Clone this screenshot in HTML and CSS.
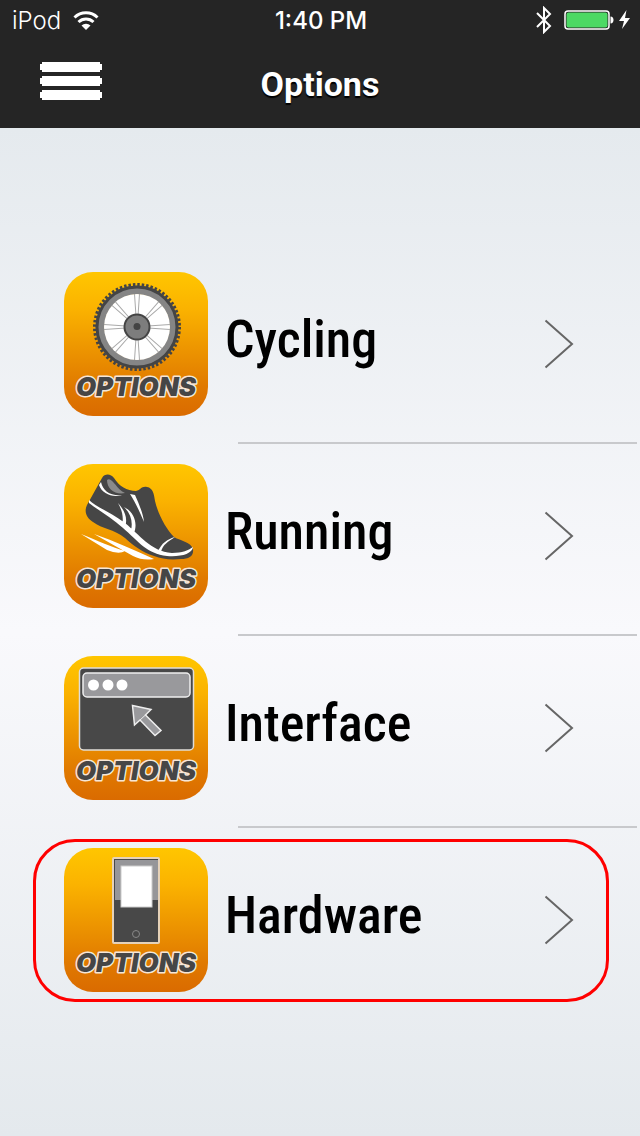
FILE: index.html
```html
<!DOCTYPE html>
<html lang="en">
<head>
<meta charset="utf-8">
<meta name="viewport" content="width=device-width, initial-scale=1">
<title>Options</title>
<link rel="stylesheet" href="styles.css">
</head>
<body>
<svg class="defs" aria-hidden="true">
  <defs>
    <linearGradient id="tile" x1="0" y1="0" x2="0" y2="1">
      <stop offset="0" stop-color="#ffc600"/>
      <stop offset=".25" stop-color="#fbb300"/>
      <stop offset=".8" stop-color="#e07900"/>
      <stop offset="1" stop-color="#da6b00"/>
    </linearGradient>
    <g id="base">
      <rect width="144" height="144" rx="29" fill="url(#tile)"/>
      <text class="tile-text" x="72" y="124" text-anchor="middle">OPTIONS</text>
    </g>
    <g id="spokes" stroke="#aaa" stroke-width="1">
      <path d="M70.500 22l1.500 22M75.500 22L74 44M70.500 88L72 66M75.500 88L74 66"/>
    </g>
  </defs>
</svg>
<header class="top">
  <div class="status">
    <div class="status-left">
      <span>iPod</span>
      <svg width="26" height="19" viewBox="0 0 26 19" fill="none" stroke="#fff" stroke-width="3">
        <path d="M1.500 6.500a16.500 16.500 0 0 1 23 0M5.500 11a11 11 0 0 1 15 0"/>
        <path d="M13 19l-4.500-4.500a6.500 6.500 0 0 1 9 0z" fill="#fff" stroke="none"/>
      </svg>
    </div>
    <div class="clock">1:40 PM</div>
    <div class="status-right">
      <svg width="16" height="28" viewBox="0 0 16 28" fill="none" stroke="#fff" stroke-width="2">
        <path d="M1 7l13 13-6 6V2l6 6L1 21"/>
      </svg>
      <svg width="66" height="22" viewBox="0 0 66 22">
        <rect x="1" y="2" width="44" height="18" rx="3" fill="none" stroke="#fff" stroke-width="1.500"/>
        <rect x="2.500" y="3.500" width="41" height="15" rx="2" fill="#4cd964"/>
        <path d="M46.500 7.500c4 0 4 7 0 7z" fill="#fff"/>
        <path d="M62.500 1L55 12h5l-2 8 8-11h-5z" fill="#fff"/>
      </svg>
    </div>
  </div>
  <div class="bar">
    <button class="menu" type="button" aria-label="Menu">
      <svg width="62" height="38" viewBox="0 0 62 38" fill="#fff">
        <path d="M2 0h58v2h2v6h-2v2H2V8H0V2h2zM2 14h58v2h2v6h-2v2H2v-2H0v-6h2zM2 28h58v2h2v6h-2v2H2v-2H0v-6h2z"/>
      </svg>
    </button>
    <h1 class="title">Options</h1>
  </div>
</header>
<main class="content">
  <ul class="list">
    <li class="item">
      <a class="row" href="#cycling">
        <svg class="tile" viewBox="0 0 144 144">
          <use href="#base"/>
          <circle cx="73" cy="55" r="37" fill="none" stroke="#858585" stroke-width="9"/>
          <circle cx="73" cy="55" r="42.500" fill="none" stroke="#444" stroke-width="3" stroke-dasharray="2.500 1.950"/>
          <circle cx="73" cy="55" r="40" fill="none" stroke="#444" stroke-width="3"/>
          <circle cx="73" cy="55" r="33" fill="#fff"/>
          <use href="#spokes"/>
          <use href="#spokes" transform="rotate(45 73 55)"/>
          <use href="#spokes" transform="rotate(90 73 55)"/>
          <use href="#spokes" transform="rotate(135 73 55)"/>
          <circle cx="73" cy="55" r="12.500" fill="#7d7d7d" stroke="#444" stroke-width="2"/>
          <circle cx="73" cy="54.500" r="3.500" fill="#444"/>
        </svg>
        <span class="label">Cycling</span>
        <svg class="chevron" viewBox="0 0 30 50"><path d="M1.500 1.500L28 25 1.500 48.500"/></svg>
      </a>
    </li>
    <li class="item">
      <a class="row" href="#running">
        <svg class="tile" viewBox="0 0 144 144">
          <use href="#base"/>
          <path d="M38 14C41 9 47 10 50 14C55 22 63 27 72 27C77 26 77 22 83 23C89 24 90 30 91 37C94 50 102 65 110 73C117 77 127 78 129 85C130 92 125 95 117 95C106 96 98 95 90 92C78 88 70 82 61 74C50 65 38 65 29 58C22 54 20 47 23 41Z" fill="#464646"/>
          <path d="M43 16C48 12 52 25 61 29C51 31 43 25 43 16z" fill="#8a8a8a"/>
          <path d="M37 18C39 27 46 32 58 31C49 34 38 30 35 21z" fill="#fff"/>
          <path d="M25 36C32 43 48 49 61 59C76 71 86 87 108 89C118 89 125 86 129 83C128 90 117 93 103 92C83 90 74 77 59 64C48 54 34 46 25 39zM66 30l5 1C75 40 79 49 80 58C76 49 72 39 66 30zM54 39C61 47 64 54 61 64L58 61C60 54 58 46 54 39zM60 43C70 48 74 59 70 69L67 66C69 58 67 50 60 43zM94 88C97 79 104 75 111 73C104 78 99 80 97 88zM17 70C34 77 48 83 61 87Q55 91 43 86zM30 70C50 77 70 86 90 95Q79 97 69 92z" fill="#fff"/>
        </svg>
        <span class="label">Running</span>
        <svg class="chevron" viewBox="0 0 30 50"><path d="M1.500 1.500L28 25 1.500 48.500"/></svg>
      </a>
    </li>
    <li class="item">
      <a class="row" href="#interface">
        <svg class="tile" viewBox="0 0 144 144">
          <use href="#base"/>
          <rect x="15.500" y="12" width="114" height="82" rx="4" fill="#484848" stroke="#e0ddd8" stroke-width="1.500"/>
          <rect x="19" y="17" width="107" height="24" rx="4" fill="#99999c" stroke="#eee" stroke-width="1.500"/>
          <circle cx="29.500" cy="29" r="5.500" fill="#fff"/>
          <circle cx="44" cy="29" r="5.500" fill="#fff"/>
          <circle cx="58" cy="29" r="5.500" fill="#fff"/>
          <path d="M68.500 49.500L87 53.500 81.500 59 97 74.500 91 79.500 76 64 70.500 69z" fill="#99999c" stroke="#eee" stroke-width="1.500"/>
          <path d="M76 64l5.500-5" stroke="#eee"/>
        </svg>
        <span class="label">Interface</span>
        <svg class="chevron" viewBox="0 0 30 50"><path d="M1.500 1.500L28 25 1.500 48.500"/></svg>
      </a>
    </li>
    <li class="item">
      <a class="row selected" href="#hardware">
        <svg class="tile" viewBox="0 0 144 144">
          <use href="#base"/>
          <rect x="49" y="10" width="46" height="85" rx="1" fill="#484848" stroke="#e6d2b8" stroke-width="2"/>
          <path d="M51 12h43v40H51z" fill="#969699"/>
          <rect x="57" y="18" width="31" height="41" fill="#fff" stroke="#ccc"/>
          <circle cx="72" cy="86" r="3.500" fill="none" stroke="#888"/>
        </svg>
        <span class="label">Hardware</span>
        <svg class="chevron" viewBox="0 0 30 50"><path d="M1.500 1.500L28 25 1.500 48.500"/></svg>
      </a>
    </li>
  </ul>
</main>
</body>
</html>
```
FILE: styles.css
```css
* {
  box-sizing: border-box;
}

body {
  margin: 0;
  min-height: 100vh;
  display: flex;
  flex-direction: column;
  font-family: Inter, "Liberation Sans", sans-serif;
}

svg {
  display: block;
}

.defs {
  position: absolute;
  width: 0;
  height: 0;
}

.top {
  background: #252525;
  color: #fff;
}

.status {
  display: grid;
  grid-template-columns: 1fr auto 1fr;
  align-items: center;
  height: 40px;
  padding: 0 10px 0 12px;
  font-size: 24px;
}

.status-left,
.status-right {
  display: flex;
  align-items: center;
  gap: 12px;
}

.status-left {
  font-weight: 300;
}

.status-right {
  justify-content: flex-end;
}

.clock {
  font-weight: 500;
}

.bar {
  display: grid;
  grid-template-columns: 1fr auto 1fr;
  align-items: center;
  height: 88px;
  padding: 0 40px;
}

.menu {
  justify-self: start;
  padding: 0 0 6px;
  border: 0;
  background: none;
}

.title {
  margin: 0;
  font: bold 34px/40px Roboto, sans-serif;
  text-shadow: 0 2px 1px #000;
}

.content {
  flex: 1;
  padding-top: 124px;
  background: linear-gradient(#e5eaee, #f9f9fc 50%, #e4e9ed);
}

.list {
  margin: 0;
  padding: 0;
  list-style: none;
}

.item {
  padding-top: 20px;
}

.item:not(:last-child)::after {
  content: "";
  display: block;
  height: 2px;
  margin: 26px 3px 0 238px;
  background: #c8c9cc;
}

.row {
  position: relative;
  display: flex;
  align-items: center;
  padding: 0 66px 0 64px;
  color: #000;
  text-decoration: none;
}

.selected::before {
  content: "";
  position: absolute;
  inset: -9px 31px -10px 33px;
  border: 3px solid #f00;
  border-radius: 42px;
}

.tile {
  width: 144px;
  height: 144px;
}

.tile-text {
  font: italic 900 26px Inter, sans-serif;
  fill: #464646;
  stroke: #f6e6d6;
  stroke-width: 3px;
  stroke-linejoin: round;
  paint-order: stroke;
}

.label {
  flex: 1;
  padding: 0 0 8px 17px;
  font: 500 52px/64px "Roboto Condensed", "Liberation Sans Narrow", "Arial Narrow", sans-serif;
}

.chevron {
  width: 30px;
  height: 50px;
  fill: none;
  stroke: #666;
  stroke-width: 2;
}
```
